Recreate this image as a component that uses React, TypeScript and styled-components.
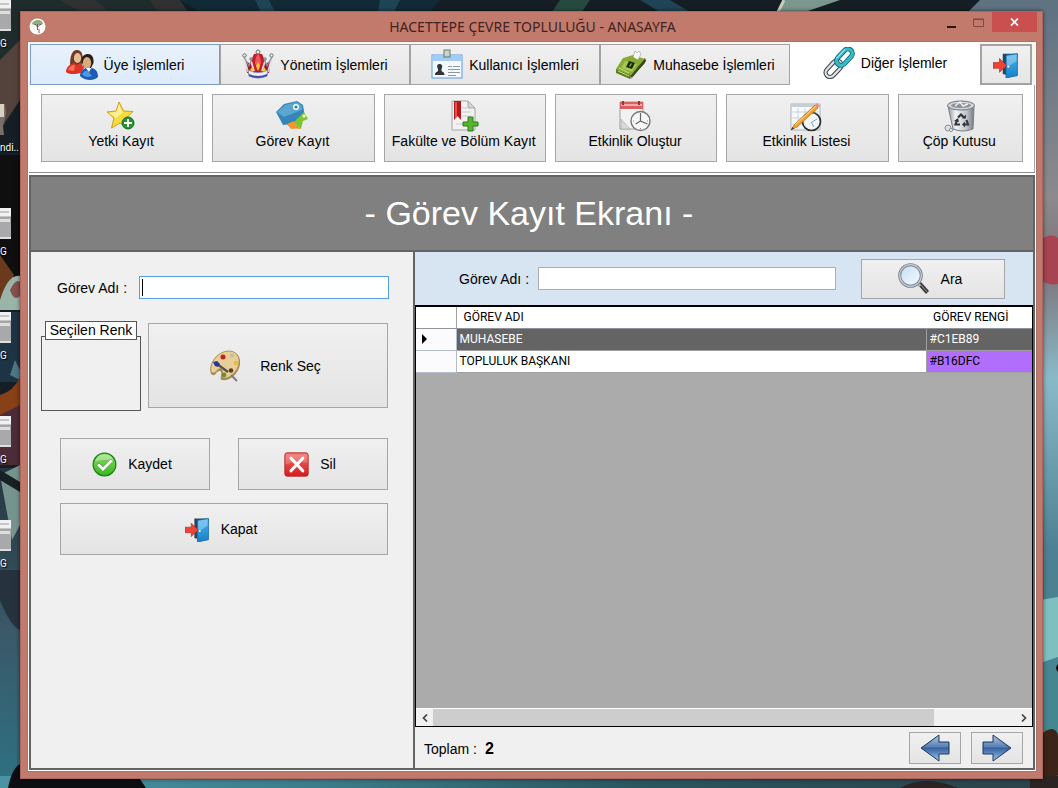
import React from 'react';
import styled, { createGlobalStyle } from 'styled-components';

const GlobalStyle = createGlobalStyle`
  *, *::before, *::after { box-sizing: border-box; }
  body {
    margin: 0;
    background: #1c2a30;
    color: #000;
    font: 14px/18px "Liberation Sans", Arial, sans-serif;
  }
  button, input { font: inherit; color: inherit; }
`;

/* ---------- desktop ---------- */

const Desktop = styled.div`
  position: relative;
  display: flex;
  min-height: 100vh;
  padding: 11px 15px 9px 20px;
  overflow: hidden;
`;

const WallpaperArt = styled.svg`
  position: absolute;
  inset: 0;
  width: 100%;
  height: 100%;
`;

const Shortcuts = styled.ul`
  position: absolute;
  top: 0;
  left: 0;
  width: 20px;
  height: 100%;
  margin: 0;
  padding: 0;
  overflow: hidden;
  list-style: none;
`;

const Shortcut = styled.li`
  height: 104px;
  color: #fff;
  font: 10px/14px Roboto, sans-serif;
  text-shadow: 1px 1px 1px #000;
  white-space: nowrap;

  svg { display: block; margin-bottom: 4px; }
`;

const Window = styled.div`
  position: relative;
  display: flex;
  flex: 1;
  flex-direction: column;
  min-width: 0;
  padding: 0 7px 8px 8px;
  background: #c27a6d;
  box-shadow: inset 0 0 0 1px #a9675f, 0 0 4px rgba(0, 0, 0, 0.6);
`;

const TitleBar = styled.header`
  display: grid;
  grid-template-columns: 1fr auto 1fr;
  height: 31px;
  margin-right: -1px;
  color: #40231f;
`;

const Title = styled.h1`
  margin: 0;
  padding-top: 1px;
  font: 400 14px/30px "Noto Sans", sans-serif;
`;

const AppMark = styled.span`
  padding: 7px 0 0 1px;
  svg { display: block; }
`;

const WindowControls = styled.div`
  display: flex;
  justify-content: flex-end;
  align-items: flex-start;
  padding-top: 1px;
`;

const ControlButton = styled.button<{ $close?: boolean }>`
  display: grid;
  place-items: center;
  width: ${p => (p.$close ? 45 : 27)}px;
  height: 20px;
  padding: 0;
  border: 0;
  background: ${p => (p.$close ? '#c9504f' : 'transparent')};
`;

const Client = styled.div`
  display: flex;
  flex: 1;
  flex-direction: column;
  padding: 0 1px 1px;
  background: #fff;
  box-shadow: 0 0 0 1px #a8736a;
`;

/* ---------- tabs and ribbon ---------- */

const Tabs = styled.nav`
  display: flex;
  height: 43px;
  padding: 0 3px 0 1px;
  background: #f6f6ee;
`;

const tabBorder = { hot: '#7d9cc4', active: '#fff', plain: '#a3a3a3' };
const tabFill = {
  hot: 'linear-gradient(#e9f1fb, #dcebfc)',
  active: '#fff',
  plain: 'linear-gradient(#f0f0f0, #e6e6e6)',
};

const Tab = styled.button<{ $look?: 'hot' | 'active' }>`
  display: flex;
  flex: 1;
  align-items: center;
  justify-content: center;
  gap: 6px;
  min-width: 0;
  margin-top: ${p => (p.$look === 'active' ? 0 : 2)}px;
  padding: 0 0 ${p => (p.$look === 'active' ? 2 : 0)}px;
  border: 1px solid ${p => tabBorder[p.$look ?? 'plain']};
  background: ${p => tabFill[p.$look ?? 'plain']};
  white-space: nowrap;
`;

const ExitTab = styled(Tab)`
  flex: 0 0 52px;
  border-width: 2px;
`;

const Ribbon = styled.div`
  display: flex;
  gap: 9px;
  padding: 9px 11px 10px 12px;
  border-right: 1px solid #a3a3a3;
  border-bottom: 1px solid #8e8e8e;
`;

const face = `
  border: 1px solid #a6a6a6;
  background: linear-gradient(#f0f0f0, #e4e4e4);
`;

const RibbonButton = styled.button<{ $narrow?: boolean }>`
  ${face}
  display: flex;
  flex: ${p => (p.$narrow ? '125 1 0' : '163 1 0')};
  flex-direction: column;
  align-items: center;
  min-width: 0;
  height: 68px;
  padding: 5px 2px 0 0;
  white-space: nowrap;
`;

/* ---------- main ---------- */

const Main = styled.main`
  display: flex;
  flex: 1;
  flex-direction: column;
  margin-top: 2px;
  border: 2px solid #646464;
  background: #f0f0f0;
`;

const Banner = styled.h2`
  margin: 0;
  padding-right: 6px;
  border-bottom: 2px solid #646464;
  background: #808080;
  color: #fff;
  font-size: 34px;
  font-weight: 400;
  line-height: 73px;
  text-align: center;
`;

const Split = styled.div`
  display: flex;
  flex: 1;
`;

const Form = styled.form`
  display: flex;
  flex: 0 0 382px;
  flex-direction: column;
  padding: 24px 24px 0 10px;
`;

const FieldRow = styled.div`
  display: flex;
  align-items: center;
  gap: 12px;
  padding-left: 16px;
`;

const InputFrame = styled.div`
  position: relative;
  display: flex;
  flex: 1;
`;

const Caret = styled.span`
  position: absolute;
  top: 3px;
  left: 3px;
  width: 1px;
  height: 17px;
  background: #000;
`;

const TextInput = styled.input<{ $active?: boolean }>`
  flex: 1;
  min-width: 0;
  height: 23px;
  padding: 0 4px;
  border: 1px solid ${p => (p.$active ? '#569de5' : '#abadb3')};
  border-radius: 0;
  outline: 0;
  background: #fff;
`;

const ColourRow = styled.div`
  display: flex;
  gap: 7px;
  margin-top: 22px;
  padding-right: 1px;
`;

const ColourGroup = styled.div`
  display: flex;
  flex: 0 0 100px;
  flex-direction: column;
`;

const ColourCaption = styled.span`
  z-index: 1;
  align-self: center;
  margin-bottom: -4px;
  padding: 0 4px;
  border: 1px solid #555;
  background: #fff;
  line-height: 17px;
`;

const ColourSwatch = styled.div`
  height: 75px;
  border: 1px solid #555;
`;

const ActionButton = styled.button<{ $gap?: number; $height?: number }>`
  ${face}
  display: flex;
  flex: 1;
  align-items: center;
  justify-content: center;
  gap: ${p => p.$gap ?? 11}px;
  height: ${p => p.$height ?? 52}px;
  padding: 0 6px 0 0;
`;

const PaletteButton = styled(ActionButton)`
  margin-top: 2px;
`;

const Actions = styled.div`
  display: grid;
  grid-template-columns: 1fr 1fr;
  gap: 13px 28px;
  margin-top: 27px;
  padding: 0 1px 0 19px;
`;

const CloseFormButton = styled(ActionButton)`
  grid-column: 1 / -1;
`;

const Results = styled.section`
  display: flex;
  flex: 1;
  flex-direction: column;
  min-width: 0;
  border-left: 2px solid #646464;
`;

const SearchBar = styled.form`
  display: flex;
  align-items: center;
  height: 53px;
  padding: 0 28px 0 44px;
  background: #d7e4f2;
`;

const SearchInput = styled(TextInput)`
  margin: 0 25px 0 9px;
`;

const SearchButton = styled(ActionButton)`
  flex: 0 0 144px;
`;

const Grid = styled.div`
  display: flex;
  flex: 1;
  flex-direction: column;
  justify-content: space-between;
  border: solid #000;
  border-width: 2px 1px 1px;
  background: #ababab;
`;

const Table = styled.table`
  width: 100%;
  border-collapse: collapse;
  table-layout: fixed;
  background: #fff;
  font: 12px/20px Roboto, sans-serif;
`;

const HeadCell = styled.th<{ $width?: number }>`
  width: ${p => (p.$width ? `${p.$width}px` : 'auto')};
  height: 21px;
  padding: 0 0 0 7px;
  border-bottom: 1px solid #8f949c;
  font-weight: 400;
  text-align: left;

  &:first-child { border-right: 1px solid #a0a0a0; }
`;

const Marker = styled.td`
  height: 22px;
  padding: 0 0 0 6px;
  border: solid #b5bccb;
  border-width: 0 1px 1px 0;
  background: #fbfbfe;

  svg { display: block; }
`;

const Cell = styled.td<{ $fill?: string; $selected?: boolean }>`
  height: 22px;
  padding: 0 0 0 3px;
  border: solid #a0a0a0;
  border-width: 0 0 1px 1px;
  background: ${p => (p.$selected ? '#646464' : p.$fill ?? '#fff')};
  color: ${p => (p.$selected ? '#fff' : '#000')};
`;

const ScrollBar = styled.div`
  display: flex;
  height: 18px;
  border-top: 1px solid #fff;
  background: #f0f0f0;
`;

const ScrollArrow = styled.button`
  display: grid;
  flex: 0 0 17px;
  place-items: center;
  padding: 0;
  border: 0;
  background: transparent;
`;

const ScrollTrack = styled.div`
  flex: 1;
`;

const ScrollThumb = styled.div`
  width: 86%;
  height: 100%;
  background: #cdcdcd;
`;

const Footer = styled.footer`
  display: flex;
  align-items: center;
  gap: 10px;
  height: 41px;
  padding: 0 10px 0 9px;
`;

const Total = styled.p`
  display: flex;
  flex: 1;
  gap: 8px;
  margin: 0;
  padding-top: 2px;

  strong { font-size: 16px; }
`;

const PagerButton = styled.button`
  ${face}
  display: grid;
  place-items: center;
  width: 52px;
  height: 32px;
  padding: 0;
`;

/* ---------- drawings ---------- */

const Icon = ({ size = 32, children }: { size?: number; children: React.ReactNode }) => (
  <svg width={size} height={size} viewBox="0 0 32 32" aria-hidden="true">{children}</svg>
);

const Members = () => (
  <Icon>
    <path d="M4 17C4 7 6 1 11 1s6 5 6 12l-3 5H6z" fill="#6e3a22" />
    <ellipse cx="11.500" cy="9" rx="3.600" ry="5" fill="#e8bd94" />
    <path d="M0 23c0-5 4-8 8-9l3 2 4-2 3 5-3 5c-5 1-12 2-15-1z" fill="#dc3424" />
    <path d="M2 21c2-4 4-5 7-5l-1 6z" fill="#f6705a" />
    <path d="M15.500 12c0-5 3-7 6.500-7s6 3 5.500 9L25 19h-7z" fill="#2a1c14" />
    <ellipse cx="21" cy="14" rx="4.200" ry="6" fill="#d9ab7c" />
    <path d="M14 27c0-4 3-7 6-8l3 2 3-2c4 1 6 4 6 9-4 4-13 4-18-1z" fill="#1d5cb4" />
    <path d="M16 25c2-3 4-4 6-3l4 5c-4 2-8 1-10-2z" fill="#4f97e4" />
    <path d="M20 19l3 4 2-4z" fill="#fff" />
  </Icon>
);

const Crown = () => (
  <Icon>
    <path d="M5 24L3 11l5 4 4-10h8l4 10 5-4-2 13z" fill="#a5141f" />
    <path d="M12 22L10 13q0-8 6-9 6 1 6 9l-2 9z" fill="#c81c28" />
    <path d="M16 4q-3 5-3 10l3 8 3-8q0-5-3-10z" fill="#ee5a5a" />
    <path d="M2 8l4 15M30 8l-4 15M9 12l3 10M23 12l-3 10" stroke="#dcdce2" strokeWidth="1.800" fill="none" />
    <path d="M2 8l5 9 3-7M30 8l-5 9-3-7" stroke="#8a8f9c" strokeWidth="1.200" fill="none" />
    <path d="M6 21q10 5 20 0l-1 6q-9 4-18 0z" fill="#eceef4" stroke="#8087a0" />
    <path d="M7 25q9 4 18 0v2q-9 4-18 0z" fill="#3c4ea8" />
    <path d="M10 18l2 3-2 2-2-2zM22 18l2 3-2 2-2-2zM16 13l2 4-2 5-2-5z" fill="#f2cc3a" />
    <g fill="#e9edf2" stroke="#65707c"><circle cx="2.500" cy="6.500" r="1.700" /><circle cx="16" cy="3" r="2" /><circle cx="29.500" cy="6.500" r="1.700" /><circle cx="9" cy="10" r="1.200" /><circle cx="23" cy="10" r="1.200" /></g>
  </Icon>
);

const Badge = () => (
  <Icon>
    <rect x="1" y="6" width="30" height="23" fill="#f3f8fd" stroke="#5a9be0" />
    <path d="M1.500 6.500h29V12h-29z" fill="#a3cbf6" />
    <rect x="13" y="1" width="6" height="7" fill="#c9d6cb" stroke="#66786c" />
    <path d="M4 26c0-3 2-3 3-4v-2c-2-4 0-5 1.500-5s4 1 2 5v2c1 1 3 1 3 4z" fill="#31343a" />
    <path d="M17 17.500h4M22 17.500h7M17 20.500h12M17 23.500h12M17 26.500h8" stroke="#8e979f" />
  </Icon>
);

const CashRegister = () => (
  <Icon>
    <path d="M16 30L31 12l-1-3-6 6z" fill="#2a3216" />
    <path d="M1 20L8 9l10-3 12 4-14 16z" fill="#87ab33" />
    <path d="M1 20l15 6-1 4L1 24z" fill="#5d7f1e" />
    <path d="M16 26l13-15 1 3-15 16z" fill="#3b4d17" />
    <path d="M10 12l12 3-5 8-11-4z" fill="#a5c94e" />
    <path d="M14 12l6 2-3 6-6-2z" fill="#1d2a0c" />
    <path d="M16 14l1 1-2 3-1-1z" fill="#7fa32e" />
    <path d="M4 19l10 5M3 22l11 5" stroke="#c5df7c" />
    <path d="M18 8l2-6 2 2 2-2 2 3-3 6z" fill="#f7f7f4" stroke="#9aa08c" strokeWidth=".6" />
  </Icon>
);

const Link = () => (
  <Icon>
    <g fill="none" transform="rotate(-47 16 16)" strokeLinejoin="round">
      <rect x="-1.500" y="11.500" width="19" height="9" rx="4.500" stroke="#44484e" strokeWidth="4.400" />
      <rect x="-1.500" y="11.500" width="19" height="9" rx="4.500" stroke="#dfe3e8" strokeWidth="2.200" />
      <rect x="14.500" y="11.500" width="19" height="9" rx="4.500" stroke="#146c7c" strokeWidth="5" />
      <rect x="14.500" y="11.500" width="19" height="9" rx="4.500" stroke="#35bccb" strokeWidth="3.200" />
      <path d="M18 11h12" stroke="#a6eef2" />
    </g>
  </Icon>
);

const Door = ({ size = 32 }: { size?: number }) => (
  <Icon size={size}>
    <path d="M12 2h18v4H16v22l-4-1z" fill="#24465f" />
    <path d="M16 4l14-2v27l-14 3z" fill="url(#doorBlue)" stroke="#1166a4" />
    <path d="M17 5l12-2v8l-12 8z" fill="#a8dcf8" opacity=".5" />
    <path d="M0 13h8V8l9 8.500-9 8.500v-5H0z" fill="#ee4436" stroke="#b5281f" strokeWidth=".8" />
    <circle cx="19" cy="18" r="1.200" fill="#fff" />
    <defs><linearGradient id="doorBlue" x2="0" y2="1"><stop stopColor="#52b2ea" /><stop offset="1" stopColor="#1580c8" /></linearGradient></defs>
  </Icon>
);

const Star = () => (
  <Icon>
    <path d="M14 2l4.500 9 9.500.5-7 7 3 9.500-9-5-8.500 5L9 18 2 12l9-1z" fill="#f8dc3e" stroke="#c9a11c" />
    <path d="M14 4l3.500 8.500L10 19l1-1-7-5 7.500-1z" fill="#fdf09a" />
    <circle cx="23" cy="23" r="6" fill="#22952c" stroke="#0f6f1c" />
    <path d="M23 19v8M19 23h8" stroke="#fff" strokeWidth="2" />
  </Icon>
);

const Tags = () => (
  <Icon>
    <path d="M9 23l7-2 9 8-10-1z" fill="#f28a24" />
    <path d="M20 6l6-1 3 9 3 5-5 2-2 8-9-8z" fill="#7bc52f" />
    <path d="M0 12L8 4l13-3 6 4 1 7-12 12-9 1z" fill="#3585b8" />
    <path d="M1 12l8-7 12-3 5 4v4L8 17z" fill="#5aa6cf" />
    <path d="M11 24l7-3 3 7-6 1z" fill="#f7962d" />
    <circle cx="20" cy="7" r="2.300" fill="#2f7fae" stroke="#fff" strokeWidth="1.400" /><circle cx="28" cy="16" r="1.500" fill="#fff" />
  </Icon>
);

const BookPlus = () => (
  <Icon>
    <path d="M4 1h16l7 7v22H4z" fill="#f2f2f2" stroke="#a6a6a6" />
    <path d="M20 1v7h7z" fill="#d3d3d3" stroke="#aaa" />
    <path d="M14 8h5M14 12h9M14 16h9M8 24h8" stroke="#c9c9c9" />
    <path d="M6 1h7v19l-3.500-4L6 20z" fill="#b71719" /><path d="M7 2h2v15l-2 1z" fill="#e25250" />
    <path d="M20 17h5v5h5v4h-5v5h-5v-5h-5v-4h5z" fill="#56b42e" stroke="#2b7d18" />
  </Icon>
);

const CalendarClock = () => (
  <Icon>
    <path d="M1 2h23v27H1z" fill="#f2f2f2" stroke="#9e9e9e" />
    <path d="M1 2h23v7H1z" fill="#d95f60" />
    <path d="M2 5h21" stroke="#f3a9a5" strokeWidth="2" />
    <path d="M4 1v4M20 1v4" stroke="#8f3739" strokeWidth="2" />
    <path d="M2 19l9 10H2z" fill="#d8d8d8" stroke="#aaa" strokeWidth=".6" />
    <circle cx="21.500" cy="21" r="9.500" fill="#f7f7f7" stroke="#777" strokeWidth="1.400" />
    <path d="M21.500 13v8l7 3M21.500 21l-5 3" stroke="#666" fill="none" strokeWidth="1.200" />
    <path d="M21.500 28v1M14 21h1M28 21h1" stroke="#888" />
  </Icon>
);

const CalendarPencil = () => (
  <Icon>
    <path d="M1 4h29v26H1z" fill="#f7f9fb" stroke="#a7b2bd" />
    <path d="M1 4h29v3H1z" fill="#c5ced7" />
    <path d="M2 12h27M2 18h27M2 24h27M8 8v21M15 8v21M22 8v21" stroke="#bccbd8" strokeWidth=".8" />
    <circle cx="21.500" cy="21.500" r="9" fill="#f3f5f6" fillOpacity=".85" stroke="#2b2b2b" strokeWidth="1.700" />
    <path d="M22 22l5-3M21 22l3 5" stroke="#79a5b6" />
    <path d="M1 30l3-5L25 5l3 3L7 27z" fill="#f2a22c" stroke="#ae6b16" strokeWidth=".7" />
    <path d="M25 5l2-2 3 3-2 2z" fill="#e68f92" /><path d="M5 25L26 6" stroke="#ffd98a" />
    <path d="M1 30l1.500-3L4 28.500z" fill="#333" />
  </Icon>
);

const RecycleBin = () => (
  <Icon>
    <path d="M5 6h26l-1 23q-10 4-20 0z" fill="url(#binSteel)" stroke="#7a7d84" />
    <ellipse cx="18" cy="5.500" rx="13.500" ry="4.500" fill="#d3d6da" stroke="#6f737b" />
    <ellipse cx="18" cy="5.500" rx="10" ry="2.400" fill="#8b9099" /><path d="M12 6l5-4 3 4 5-2" fill="none" stroke="#eef0f3" strokeWidth="1.500" />
    <g fill="none" stroke="#31363f" strokeWidth="2.200"><path d="M15 17.500l3-3 3 3M23.500 20l1.500 4.500h-4M17 24.500h-4.500L14 20" /></g>
    <path d="M19 18.500h4v-4zM22 21.500v6l-3-3zM11 21l4-3 1 4z" fill="#31363f" />
    <circle cx="5" cy="28" r="3" fill="#dcdfe4" stroke="#8c9098" /><circle cx="8" cy="30" r="1.600" fill="#eee" stroke="#8c9098" />
    <defs><linearGradient id="binSteel"><stop stopColor="#92969e" /><stop offset=".3" stopColor="#f2f3f5" /><stop offset=".7" stopColor="#c3c6cb" /><stop offset="1" stopColor="#777b83" /></linearGradient></defs>
  </Icon>
);

const Palette = () => (
  <Icon>
    <path d="M2 24C-1 14 8 1 20 1c10 0 13 10 10 17-3 8-10 13-17 12-4-1 2-7-2-9-4-1-4 7-9 3z" fill="#a58a52" />
    <path d="M2 22C0 13 9 1 20 1c9 0 12 9 9 16-3 7-9 12-15 11-4-1 2-6-2-9-4-2-5 7-10 3z" fill="#e7cf97" stroke="#9b824f" strokeWidth=".7" />
    <circle cx="14" cy="7" r="2.500" fill="#c22120" /><circle cx="23" cy="5.500" r="2" fill="#c7b9a1" /><circle cx="27" cy="13" r="2.300" fill="#e8bb3a" />
    <circle cx="15" cy="25" r="2.400" fill="#718f2a" /><circle cx="22" cy="20.500" r="2.300" fill="#5b3c2a" />
    <path d="M8 14l11 8" stroke="#5c514a" strokeWidth="2.400" /><path d="M22 25l6 6" stroke="#7c7a84" strokeWidth="2" />
    <path d="M4 12l4-1 3 3-2 3-3-1z" fill="#28359d" />
  </Icon>
);

const Check = () => (
  <Icon size={25}>
    <circle cx="16" cy="16" r="14.500" fill="url(#okGreen)" stroke="#1c7d14" strokeWidth="1.600" />
    <path d="M4 12a12.500 12.500 0 0 1 24 0q-10-4-24 0z" fill="#fff" opacity=".35" />
    <path d="M6 17l3-3 5 5 10-10 3 3-13 13z" fill="#fff" stroke="#2e8f22" strokeWidth=".8" />
    <defs><linearGradient id="okGreen" x2="0" y2="1"><stop stopColor="#8bdc6a" /><stop offset="1" stopColor="#35b81c" /></linearGradient></defs>
  </Icon>
);

const Cross = () => (
  <Icon size={25}>
    <rect x="1" y="1" width="30" height="30" rx="3" fill="url(#delRed)" stroke="#b31d1d" />
    <path d="M2 3h28v11Q16 10 2 16z" fill="#fff" opacity=".2" />
    <path d="M9 8l15 16M24 8L9 24" stroke="#fff" strokeWidth="4" strokeLinecap="round" />
    <defs><linearGradient id="delRed" x2="0" y2="1"><stop stopColor="#f0716a" /><stop offset="1" stopColor="#d41c1c" /></linearGradient></defs>
  </Icon>
);

const Magnifier = () => (
  <Icon>
    <path d="M20 22l3-3 8 9-3 3z" fill="#3a3c3a" /><path d="M22 21l7 8" stroke="#9a9c92" />
    <path d="M18 19l4 4" stroke="#b8b8b8" strokeWidth="3" />
    <circle cx="12.500" cy="12.500" r="10.800" fill="url(#glass)" stroke="#77808c" strokeWidth="3" />
    <circle cx="12.500" cy="12.500" r="10.800" fill="none" stroke="#c9d0d8" strokeWidth="1.200" />
    <defs><linearGradient id="glass" x2="1" y2="1"><stop stopColor="#c4def6" /><stop offset="1" stopColor="#f7fbff" /></linearGradient></defs>
  </Icon>
);

const PagerArrow = ({ forward }: { forward?: boolean }) => (
  <svg width="30" height="28" viewBox="0 0 30 28" aria-hidden="true">
    <g transform={forward ? 'matrix(-1 0 0 1 30 0)' : undefined}>
      <path d="M1 14L19 1v7h10v12H19v7z" fill="url(#arrowBlue)" stroke="#23395c" />
      <path d="M3 13.500L18 3v6h10v4.500z" fill="#fff" opacity=".15" />
    </g>
    <defs><linearGradient id="arrowBlue" x2="0" y2="1"><stop stopColor="#a3c3e8" /><stop offset=".5" stopColor="#34609f" /><stop offset="1" stopColor="#9cc8f0" /></linearGradient></defs>
  </svg>
);

const TreeMark = () => (
  <svg width="17" height="17" viewBox="0 0 17 17" aria-hidden="true">
    <circle cx="8.500" cy="8.500" r="8" fill="#fbfbf8" />
    <path d="M3 6c0-2 3-4 6-4s5 2 5 4c-1 1-3 1-5 1-3 0-5 0-6-1z" fill="#8fae86" />
    <path d="M8.500 6v6M6 6l2.500 3L12 6M10 11v4" stroke="#6b3b34" strokeWidth=".8" fill="none" />
  </svg>
);

const ShortcutPicture = ({ photo }: { photo?: boolean }) => (
  <svg width="12" height="33" viewBox="0 0 12 33" aria-hidden="true">
    {photo
      ? <><path d="M0 0h5l1 10-3 12 1 9H0z" fill="#776f68" /><path d="M0 0h4v13H0z" fill="#d8d0c4" /></>
      : <><path d="M0 0h11v31H0z" fill="#a9a9ab" /><path d="M0 0h11v9H0z" fill="#f1f1f1" /><path d="M0 4h9M0 9h11" stroke="#9a9a9a" /><path d="M0 11h10v3H0zM0 29h11v2H0z" fill="#dedede" /></>}
  </svg>
);

const Wallpaper = () => (
  <WallpaperArt viewBox="0 0 1058 788" preserveAspectRatio="none" aria-hidden="true">
    <defs>
      <linearGradient id="leftSea" x2="0" y2="1"><stop stopColor="#24363f" /><stop offset=".5" stopColor="#3a5868" /><stop offset="1" stopColor="#2e7283" /></linearGradient>
      <linearGradient id="rightSky" x2="0" y2="1"><stop stopColor="#5e7282" /><stop offset=".25" stopColor="#8b8a8d" /><stop offset=".34" stopColor="#7d7278" /><stop offset=".48" stopColor="#8abac8" /><stop offset=".7" stopColor="#4d8092" /><stop offset="1" stopColor="#3f8a90" /></linearGradient>
      <linearGradient id="floor"><stop stopColor="#4a93a4" /><stop offset=".3" stopColor="#3b7d8a" /><stop offset=".6" stopColor="#2a5660" /><stop offset="1" stopColor="#2c4248" /></linearGradient>
    </defs>
    <path d="M0 0h1058v788H0z" fill="#141e24" />
    <path d="M0 0h180v60H0z" fill="#1f2c2c" />
    <path d="M60 0l20 12h30L95 0zM150 0h30l8 12h-30z" fill="#2f3230" />
    <path d="M180 0h260l-10 12H200z" fill="#122a36" />
    <path d="M255 0h14l6 12h-14zM380 0h20l-6 12h-16zM640 0h30l20 12h-30z" fill="#1f4456" />
    <path d="M560 0h30l-8 12h-30z" fill="#264a40" />
    <path d="M785 0h55l-35 12h-28z" fill="#7c978e" /><path d="M784 0l-6 12" stroke="#c9cfc0" strokeWidth="3" />
    <path d="M980 0h78v20H960z" fill="#5e7282" />
    <path d="M1040 0h18v788h-18z" fill="url(#rightSky)" />
    <path d="M1040 240q12-8 18-2v46q-12 2-18-6z" fill="#a84352" />
    <path d="M1040 600l18-3v60l-18 6z" fill="#7ec0c0" />
    <path d="M1040 735q14-12 18 0v40l-18 13z" fill="#3c2418" />
    <path d="M1058 664q-4 4 0 8z" fill="#111" />
    <path d="M0 60l20-20v60L0 130z" fill="#54423c" />
    <path d="M0 155h20v130H0z" fill="#100f10" />
    <path d="M0 255l14 20-14 30z" fill="#6b3a1c" />
    <path d="M0 300q8-26 20-24v34H0z" fill="#9bb4a8" /><path d="M10 290q6-12 10-8v14q-6 6-10-6z" fill="#84504f" />
    <path d="M0 312h20v70H0z" fill="#1c3444" /><path d="M10 375l5-15 5 10v10z" fill="#4d7684" />
    <path d="M0 395q14-4 20-18v28L0 420z" fill="#874018" />
    <path d="M0 415l20-10v60H0z" fill="#4c2c38" />
    <path d="M0 468h20v320H0z" fill="url(#leftSea)" />
    <path d="M0 475l20-10v60l-8 15z" fill="#76948e" /><path d="M0 470l20 12v10L0 480z" fill="#182024" />
    <path d="M0 570h20v60q-10-4-20-30z" fill="#26323e" />
    <path d="M0 776h1058v12H0z" fill="url(#floor)" />
    <path d="M8 788q4-20 12-24v12h118l8 12z" fill="#0c0f11" />
    <path d="M900 788q25-14 58 0zM1030 776h28v12h-28z" fill="#2b2422" />
  </WallpaperArt>
);

/* ---------- data ---------- */

const shortcuts = ['G', 'ndi..', 'G', 'G', 'G', 'G'];

const tabs: { label: string; icon: React.ReactNode; look?: 'hot' | 'active' }[] = [
  { label: 'Üye İşlemleri', icon: <Members />, look: 'hot' },
  { label: 'Yönetim İşlemleri', icon: <Crown /> },
  { label: 'Kullanıcı İşlemleri', icon: <Badge /> },
  { label: 'Muhasebe İşlemleri', icon: <CashRegister /> },
  { label: 'Diğer İşlemler', icon: <Link />, look: 'active' },
];

const ribbon = [
  { label: 'Yetki Kayıt', icon: <Star /> },
  { label: 'Görev Kayıt', icon: <Tags /> },
  { label: 'Fakülte ve Bölüm Kayıt', icon: <BookPlus /> },
  { label: 'Etkinlik Oluştur', icon: <CalendarClock /> },
  { label: 'Etkinlik Listesi', icon: <CalendarPencil /> },
  { label: 'Çöp Kutusu', icon: <RecycleBin />, narrow: true },
];

const duties = [
  { name: 'MUHASEBE', colour: '#C1EB89', selected: true },
  { name: 'TOPLULUK BAŞKANI', colour: '#B16DFC', selected: false },
];

export default function App() {
  return (
    <Desktop>
      <GlobalStyle />
      <Wallpaper />
      <Shortcuts>
        {shortcuts.map((label, i) => (
          <Shortcut key={i}><ShortcutPicture photo={i === 1} />{label}</Shortcut>
        ))}
      </Shortcuts>
      <Window>
        <TitleBar>
          <AppMark><TreeMark /></AppMark>
          <Title>HACETTEPE ÇEVRE TOPLULUĞU - ANASAYFA</Title>
          <WindowControls>
            <ControlButton aria-label="Simge durumuna küçült">
              <svg width="9" height="12"><path d="M0 11h9" stroke="#2b1512" strokeWidth="2" /></svg>
            </ControlButton>
            <ControlButton aria-label="Ekranı kapla">
              <svg width="11" height="9"><path d="M.5 1.500h10v7H.5zM0 1h11" fill="none" stroke="#84483f" /></svg>
            </ControlButton>
            <ControlButton $close aria-label="Pencereyi kapat">
              <svg width="9" height="8"><path d="M1 .5l7 7M8 .5l-7 7" stroke="#fff" strokeWidth="1.700" /></svg>
            </ControlButton>
          </WindowControls>
        </TitleBar>
        <Client>
          <Tabs>
            {tabs.map(tab => (
              <Tab key={tab.label} $look={tab.look}>{tab.icon}{tab.label}</Tab>
            ))}
            <ExitTab aria-label="Çıkış"><Door size={26} /></ExitTab>
          </Tabs>
          <Ribbon>
            {ribbon.map(item => (
              <RibbonButton key={item.label} $narrow={item.narrow}>{item.icon}{item.label}</RibbonButton>
            ))}
          </Ribbon>
          <Main>
            <Banner>- Görev Kayıt Ekranı -</Banner>
            <Split>
              <Form onSubmit={e => e.preventDefault()}>
                <FieldRow>
                  <label htmlFor="duty">Görev Adı :</label>
                  <InputFrame>
                    <TextInput id="duty" $active />
                    <Caret />
                  </InputFrame>
                </FieldRow>
                <ColourRow>
                  <ColourGroup>
                    <ColourCaption>Seçilen Renk</ColourCaption>
                    <ColourSwatch />
                  </ColourGroup>
                  <PaletteButton type="button" $gap={19} $height={85}><Palette />Renk Seç</PaletteButton>
                </ColourRow>
                <Actions>
                  <ActionButton type="submit"><Check />Kaydet</ActionButton>
                  <ActionButton type="button"><Cross />Sil</ActionButton>
                  <CloseFormButton type="button"><Door size={25} />Kapat</CloseFormButton>
                </Actions>
              </Form>
              <Results>
                <SearchBar onSubmit={e => e.preventDefault()}>
                  <label htmlFor="search">Görev Adı :</label>
                  <SearchInput id="search" />
                  <SearchButton type="submit" $height={40}><Magnifier />Ara</SearchButton>
                </SearchBar>
                <Grid>
                  <Table>
                    <thead>
                      <tr>
                        <HeadCell $width={40} aria-label="Seçim" />
                        <HeadCell>GÖREV ADI</HeadCell>
                        <HeadCell $width={106}>GÖREV RENGİ</HeadCell>
                      </tr>
                    </thead>
                    <tbody>
                      {duties.map(duty => (
                        <tr key={duty.name}>
                          <Marker>{duty.selected && <svg width="6" height="10"><path d="M0 0l5 5-5 5z" /></svg>}</Marker>
                          <Cell $selected={duty.selected}>{duty.name}</Cell>
                          <Cell $selected={duty.selected} $fill={duty.colour}>{duty.colour}</Cell>
                        </tr>
                      ))}
                    </tbody>
                  </Table>
                  <ScrollBar>
                    <ScrollArrow aria-label="Sola kaydır"><svg width="6" height="8"><path d="M5 .5L1.500 4 5 7.500" fill="none" stroke="#444" strokeWidth="1.700" /></svg></ScrollArrow>
                    <ScrollTrack><ScrollThumb /></ScrollTrack>
                    <ScrollArrow aria-label="Sağa kaydır"><svg width="6" height="8"><path d="M1 .5L4.500 4 1 7.500" fill="none" stroke="#444" strokeWidth="1.700" /></svg></ScrollArrow>
                  </ScrollBar>
                </Grid>
                <Footer>
                  <Total>Toplam : <strong>2</strong></Total>
                  <PagerButton aria-label="Önceki"><PagerArrow /></PagerButton>
                  <PagerButton aria-label="Sonraki"><PagerArrow forward /></PagerButton>
                </Footer>
              </Results>
            </Split>
          </Main>
        </Client>
      </Window>
    </Desktop>
  );
}
